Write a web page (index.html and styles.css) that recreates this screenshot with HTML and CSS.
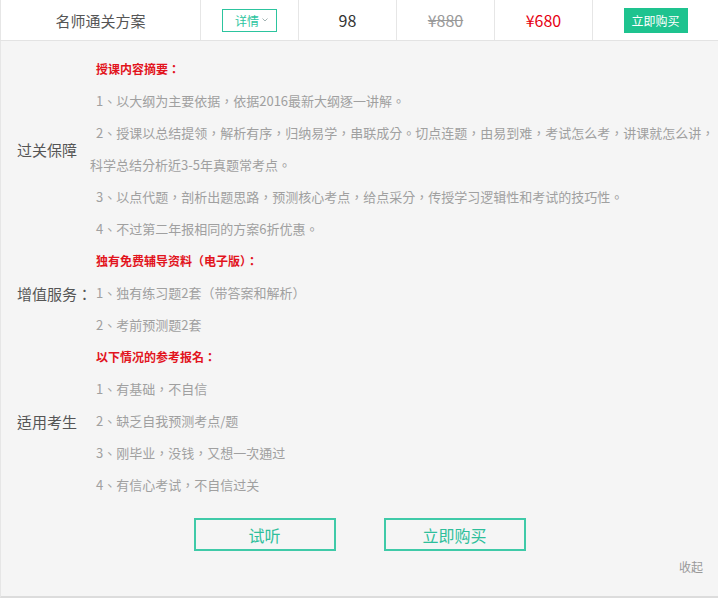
FILE: index.html
```html
<!DOCTYPE html>
<html>
<head>
    <title>名师通关方案</title>
    <link rel="stylesheet" href="styles.css">
</head>
<body>
    <div class="plan">
        <div class="plan-row">
            <div class="cell cell-name">名师通关方案</div>
            <div class="cell cell-detail">
                <span class="detail-btn">详情
                    <svg width="6" height="4" viewBox="0 0 6 4"><path d="M0.5 0.5 L3 3 L5.5 0.5" fill="none" stroke="#9aa" stroke-width="0.9"/></svg>
                </span>
            </div>
            <div class="cell cell-hours">98</div>
            <div class="cell cell-old">¥880</div>
            <div class="cell cell-price">¥680</div>
            <div class="cell cell-buy"><span class="buy-btn">立即购买</span></div>
        </div>

        <div class="plan-body">
            <div class="section">
                <div class="section-label">过关保障</div>
                <div class="section-text">
                    <p class="head">授课内容摘要：</p>
                    <p>1、以大纲为主要依据，依据2016最新大纲逐一讲解。</p>
                    <p>2、授课以总结提领，解析有序，归纳易学，串联成分。切点连题，由易到难，考试怎么考，讲课就怎么讲，科学总结分析近3-5年真题常考点。</p>
                    <p>3、以点代题，剖析出题思路，预测核心考点，给点采分，传授学习逻辑性和考试的技巧性。</p>
                    <p>4、不过第二年报相同的方案6折优惠。</p>
                </div>
            </div>
            <div class="section">
                <div class="section-label">增值服务：</div>
                <div class="section-text">
                    <p class="head">独有免费辅导资料（电子版）：</p>
                    <p>1、独有练习题2套（带答案和解析）</p>
                    <p>2、考前预测题2套</p>
                </div>
            </div>
            <div class="section">
                <div class="section-label">适用考生</div>
                <div class="section-text">
                    <p class="head">以下情况的参考报名：</p>
                    <p>1、有基础，不自信</p>
                    <p>2、缺乏自我预测考点/题</p>
                    <p>3、刚毕业，没钱，又想一次通过</p>
                    <p>4、有信心考试，不自信过关</p>
                </div>
            </div>

            <div class="actions">
                <a class="btn-line" href="#">试听</a>
                <a class="btn-line" href="#">立即购买</a>
            </div>
            <div class="fold"><a href="#">收起</a></div>
        </div>
    </div>
</body>
</html>
```

FILE: styles.css
```css
body {
    margin: 0;
    font-family: "Noto Sans CJK SC", "Noto Sans", sans-serif;
    background: #fff;
}
.plan {
    width: 718px;
}
.plan-row {
    display: flex;
    height: 40px;
    border-bottom: 1px solid #e3e3e3;
    background: #fff;
}
.cell {
    display: flex;
    align-items: center;
    justify-content: center;
    border-right: 1px solid #e6e6e6;
    font-size: 15px;
    color: #555;
}
.cell-name {
    width: 199px;
    border-left: 1px solid #e6e6e6;
}
.cell-detail, .cell-hours, .cell-old, .cell-price {
    width: 97px;
}
.cell-buy {
    flex: 1;
    border-right: none;
}
.cell-hours {
    font-size: 16px;
    color: #333;
}
.cell-old {
    font-size: 16px;
    color: #999;
    text-decoration: line-through;
}
.cell-price {
    font-size: 16px;
    color: #e60012;
}
.detail-btn {
    display: flex;
    align-items: center;
    justify-content: center;
    gap: 3px;
    width: 55px;
    height: 23px;
    border: 1px solid #2cc49e;
    font-size: 12px;
    color: #2cc49e;
    padding-left: 4px;
    box-sizing: border-box;
}
.buy-btn {
    display: flex;
    align-items: center;
    justify-content: center;
    width: 64px;
    height: 25px;
    background: #1ec38f;
    color: #fff;
    font-size: 12px;
}
.plan-body {
    background: #f5f5f5;
    border-left: 1px solid #e6e6e6;
    border-bottom: 2px solid #dcdcdc;
    padding-top: 12px;
    height: 543px;
}
.section {
    display: flex;
    align-items: center;
}
.section-label {
    width: 73px;
    padding-left: 16px;
    font-size: 15px;
    color: #555;
    white-space: nowrap;
    font-family: "Noto Sans CJK TC", sans-serif;
}
.section-text {
    flex: 1;
    font-family: "Noto Sans CJK TC", "Noto Sans CJK SC", sans-serif;
}
.section-text p {
    margin: 0;
    text-indent: 6px;
    line-height: 32px;
    font-size: 13px;
    color: #a0a0a0;
}
.section-text p.head {
    font-size: 12px;
    color: #e2141d;
    font-weight: bold;
}
.actions {
    display: flex;
    justify-content: center;
    gap: 48px;
    margin-top: 17px;
}
.btn-line {
    display: flex;
    align-items: center;
    justify-content: center;
    width: 142px;
    height: 33px;
    box-sizing: border-box;
    border: 2px solid #3fcaa8;
    color: #2ebf9b;
    font-size: 16px;
    text-decoration: none;
}
.fold {
    text-align: right;
    padding-right: 15px;
    margin-top: 2px;
}
.fold a {
    font-size: 12px;
    color: #999;
    text-decoration: none;
}
```
